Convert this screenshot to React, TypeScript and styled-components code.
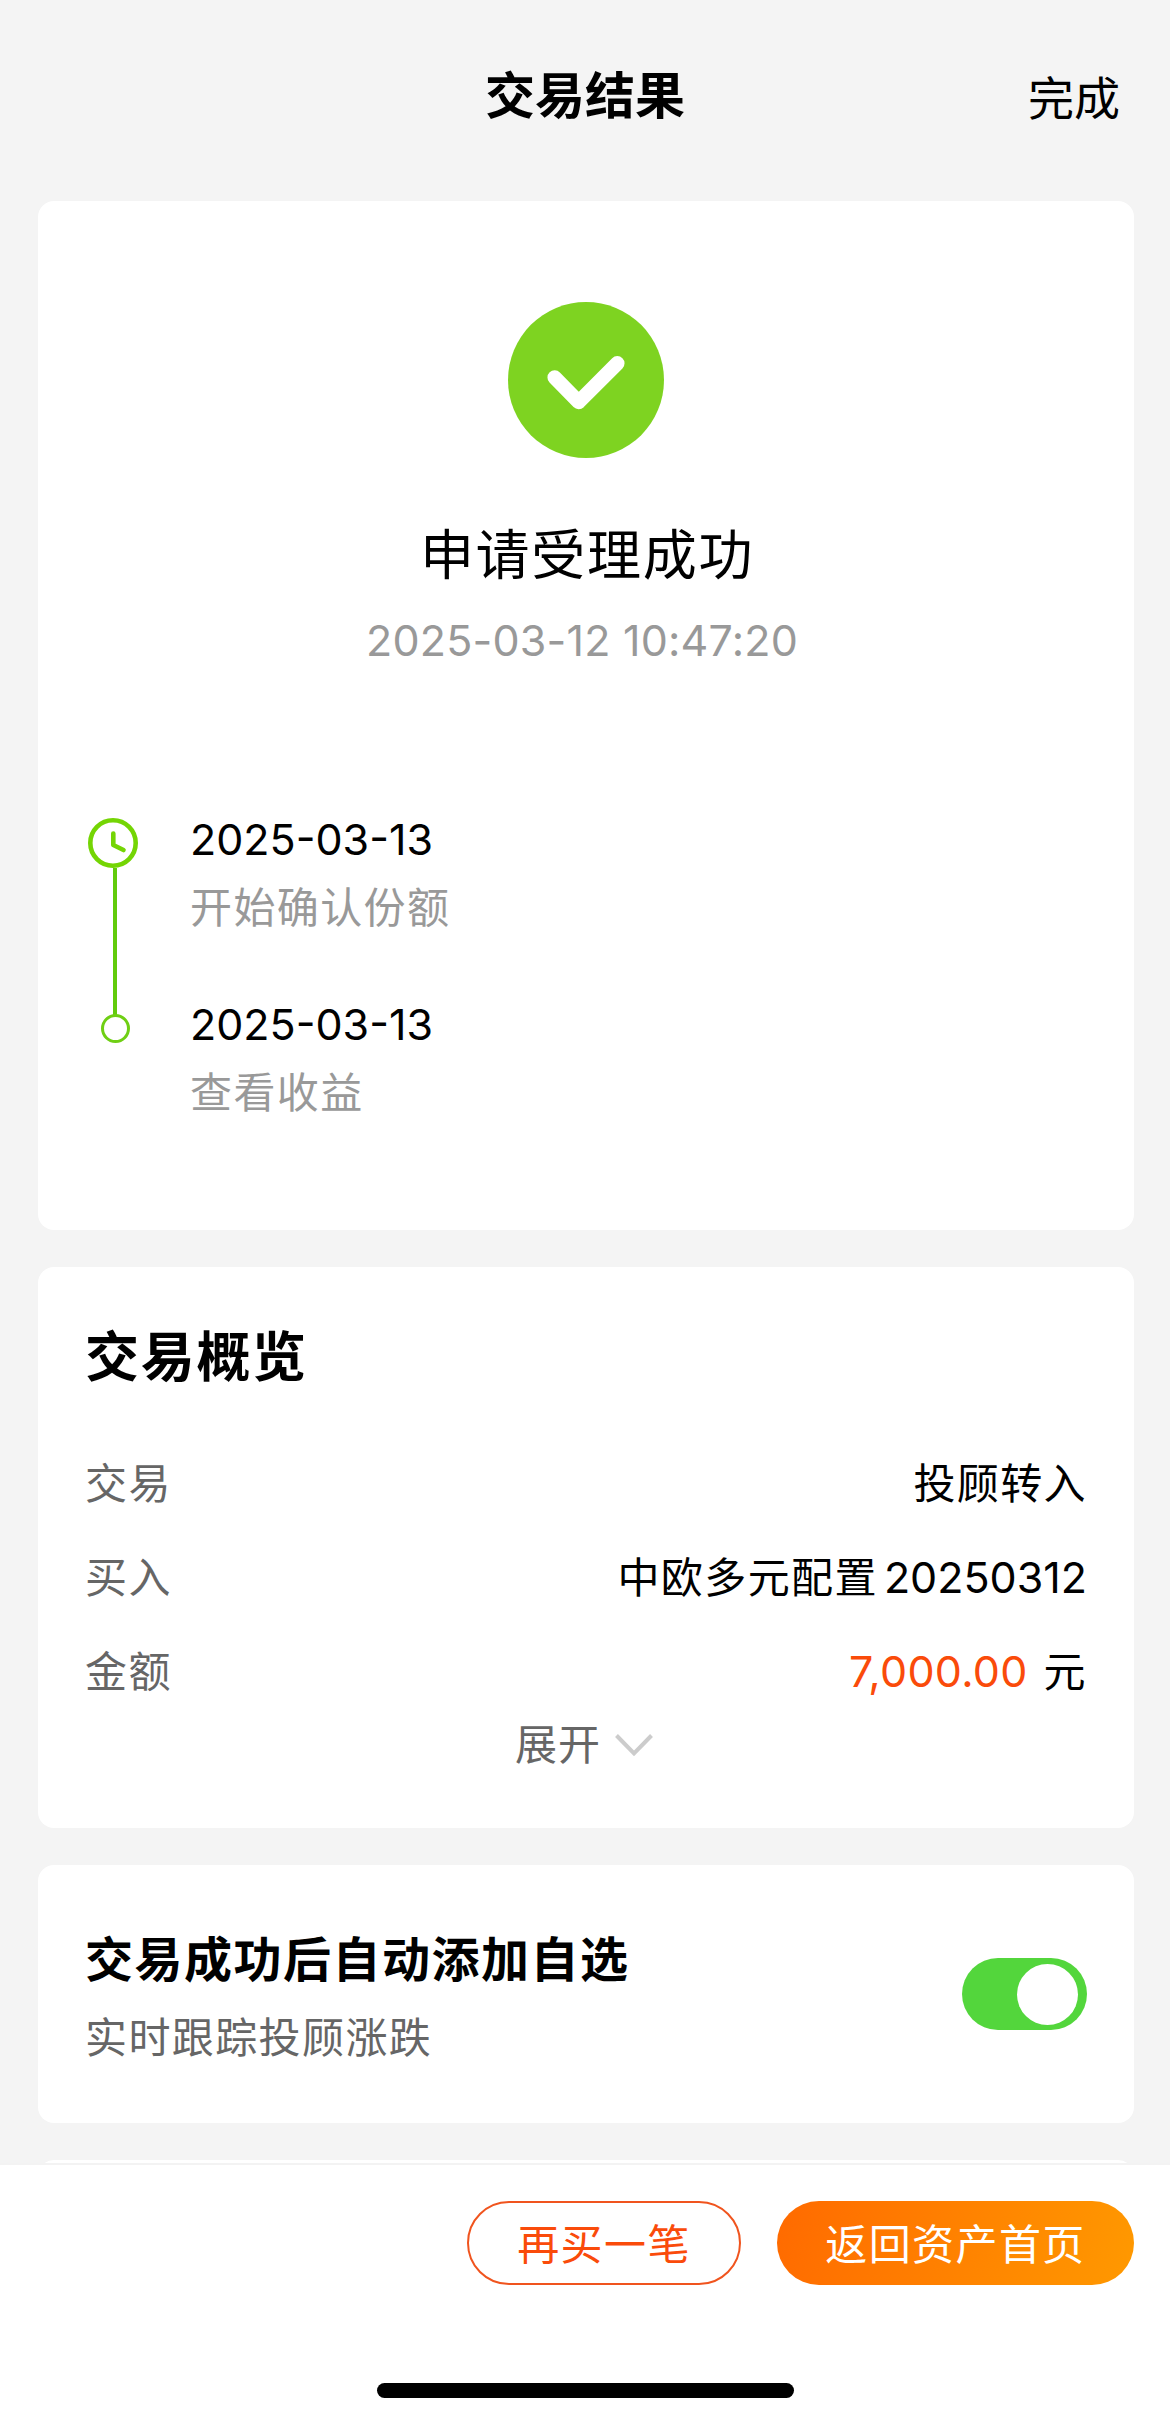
import React, { useState } from "react";
import styled, { createGlobalStyle } from "styled-components";

const GlobalStyle = createGlobalStyle`
  * { box-sizing: border-box; }
  body {
    margin: 0;
    background: #f4f4f4;
    color: #000;
    font-family: Inter, "Noto Sans CJK SC", sans-serif;
  }
  button { font: inherit; color: inherit; background: none; border: 0; padding: 0; cursor: pointer; }
  h1, h2, h3, p { margin: 0; }
`;

const Screen = styled.div`
  width: 1170px;
  height: 2422px;
  display: flex;
  flex-direction: column;
  overflow: hidden;
`;

const Header = styled.header`
  height: 201px;
  flex: none;
  display: grid;
  grid-template-columns: 1fr auto 1fr;
  align-items: start;
  padding: 60px 50px 0 50px;
`;

const Title = styled.h1`
  grid-column: 2;
  font-size: 50px;
  line-height: 72px;
  font-weight: 600;
`;

const DoneButton = styled.button`
  justify-self: end;
  font-size: 46px;
  line-height: 76px;
`;

const Content = styled.main`
  flex: 1;
  min-height: 0;
  overflow: hidden;
  padding: 0 36px 0 38px;
  display: flex;
  flex-direction: column;
`;

const Card = styled.section<{ $height: number }>`
  flex: none;
  height: ${(p) => p.$height}px;
  margin-bottom: 37px;
  padding: 0 47px;
  background: #fff;
  border-radius: 16px;
`;

const ResultHead = styled.div`
  display: flex;
  flex-direction: column;
  align-items: center;
  padding-top: 101px;
`;

const Headline = styled.h2`
  margin-top: 58px;
  padding-left: 2px;
  font-size: 54px;
  line-height: 80px;
  font-weight: 400;
  letter-spacing: 1.7px;
`;

const Timestamp = styled.p`
  margin: 16px 8px 0 0;
  font-size: 43px;
  line-height: 56px;
  letter-spacing: 0.2px;
  color: #999;
`;

const Timeline = styled.div`
  display: flex;
  gap: 49px;
  margin-top: 141px;
`;

const Rail = styled.div`
  width: 56px;
  padding-top: 9px;
  display: flex;
  flex-direction: column;
  align-items: center;
`;

const RailLine = styled.span`
  width: 4px;
  height: 147px;
  margin-left: 4px;
  background: #62cb0c;
`;

const RailDot = styled.span`
  width: 29px;
  height: 29px;
  margin: -1px 0 0 4px;
  border: 3px solid #6fcf14;
  border-radius: 50%;
`;

const Steps = styled.div`
  display: flex;
  flex-direction: column;
  gap: 56px;
`;

const StepDate = styled.p`
  font-size: 43px;
  line-height: 60px;
`;

const StepLabel = styled.p`
  margin-top: 9px;
  font-size: 42px;
  line-height: 60px;
  letter-spacing: 1.4px;
  color: #999;
`;

const SectionTitle = styled.h2`
  padding-top: 56px;
  margin-bottom: 61px;
  font-size: 54px;
  line-height: 70px;
  font-weight: 700;
  letter-spacing: 1.7px;
`;

const Rows = styled.dl`
  margin: 0;
  display: grid;
  gap: 34px;
`;

const Row = styled.div`
  display: flex;
  justify-content: space-between;
  font-size: 42px;
  line-height: 60px;
  letter-spacing: 1.4px;
`;

const RowLabel = styled.dt`
  color: #666;
`;

const RowValue = styled.dd`
  margin: 0;
  display: flex;
`;

const Digits = styled.span`
  margin: -1px 0 1px 6px;
  font-size: 43px;
  letter-spacing: 0;
`;

const Amount = styled(Digits)`
  margin: -1px 16px 1px 0;
  letter-spacing: 0.3px;
  color: #fa4b0a;
`;

const ExpandButton = styled.button`
  display: flex;
  align-items: center;
  gap: 14px;
  margin: 13px auto 0;
  padding-right: 4px;
  font-size: 42px;
  line-height: 60px;
  letter-spacing: 1px;
  color: #666;
`;

const WatchRow = styled.div`
  height: 100%;
  display: flex;
  justify-content: space-between;
  align-items: flex-start;
`;

const WatchTitle = styled.h3`
  padding-top: 60px;
  font-size: 48px;
  line-height: 70px;
  font-weight: 700;
  letter-spacing: 1.5px;
`;

const WatchHint = styled.p`
  margin-top: 13px;
  font-size: 42px;
  line-height: 60px;
  letter-spacing: 1.4px;
  color: #666;
`;

const Switch = styled.button<{ $on: boolean }>`
  display: flex;
  align-items: center;
  justify-content: ${(p) => (p.$on ? "flex-end" : "flex-start")};
  width: 125px;
  height: 72px;
  margin-top: 93px;
  padding: 0 9px;
  border-radius: 36px;
  background: ${(p) => (p.$on ? "#53d63c" : "#ddd")};
`;

const Knob = styled.span`
  width: 61px;
  height: 61px;
  border-radius: 50%;
  background: #fff;
`;

const Footer = styled.footer`
  flex: none;
  height: 259px;
  background: #fff;
  border-top: 2px solid #f3f3f3;
  padding: 36px 36px 0;
  display: flex;
  flex-direction: column;
`;

const Actions = styled.div`
  display: flex;
  justify-content: flex-end;
  gap: 36px;
`;

const ActionButton = styled.button<{ $width: number; $primary?: boolean }>`
  width: ${(p) => p.$width}px;
  height: 84px;
  border-radius: 42px;
  padding-bottom: 3px;
  font-size: 42px;
  letter-spacing: 1.4px;
  border: ${(p) => (p.$primary ? "0" : "2px solid #f0541e")};
  color: ${(p) => (p.$primary ? "#fff" : "#fa4b0a")};
  background: ${(p) => (p.$primary ? "linear-gradient(105deg, #ff6a00, #ff9900)" : "#fff")};
`;

const HomeIndicator = styled.div`
  width: 417px;
  height: 15px;
  margin: 98px auto 0;
  border-radius: 8px;
  background: #000;
`;

const SuccessIcon = () => (
  <svg width="156" height="156" viewBox="0 0 156 156">
    <circle cx="78" cy="78" r="78" fill="#7ed321" />
    <path d="M46.7 75.5 70.7 100 109.3 61.3" fill="none" stroke="#fff" strokeWidth="14.5" strokeLinecap="round" strokeLinejoin="round" />
  </svg>
);

const ClockIcon = () => (
  <svg width="50" height="50" viewBox="0 0 50 50">
    <circle cx="25" cy="25" r="22.7" fill="none" stroke="#74d504" strokeWidth="4.6" />
    <path d="M25.3 15.5V27L35.5 32" fill="none" stroke="#74d504" strokeWidth="4.6" strokeLinecap="round" strokeLinejoin="round" />
  </svg>
);

const ChevronDown = () => (
  <svg width="38" height="24" viewBox="0 0 38 24">
    <path d="M1.5 2.5 19 20.5 36.5 2.5" fill="none" stroke="#ccc" strokeWidth="4" />
  </svg>
);

const steps = [
  { date: "2025-03-13", label: "开始确认份额" },
  { date: "2025-03-13", label: "查看收益" },
];

export default function App() {
  const [watching, setWatching] = useState(true);
  return (
    <>
      <GlobalStyle />
      <Screen>
        <Header>
          <Title>交易结果</Title>
          <DoneButton>完成</DoneButton>
        </Header>
        <Content>
          <Card $height={1029}>
            <ResultHead>
              <SuccessIcon />
              <Headline>申请受理成功</Headline>
              <Timestamp>2025-03-12 10:47:20</Timestamp>
            </ResultHead>
            <Timeline>
              <Rail>
                <ClockIcon />
                <RailLine />
                <RailDot />
              </Rail>
              <Steps>
                {steps.map((s) => (
                  <div key={s.label}>
                    <StepDate>{s.date}</StepDate>
                    <StepLabel>{s.label}</StepLabel>
                  </div>
                ))}
              </Steps>
            </Timeline>
          </Card>
          <Card $height={561}>
            <SectionTitle>交易概览</SectionTitle>
            <Rows>
              <Row>
                <RowLabel>交易</RowLabel>
                <RowValue>投顾转入</RowValue>
              </Row>
              <Row>
                <RowLabel>买入</RowLabel>
                <RowValue>
                  中欧多元配置<Digits>20250312</Digits>
                </RowValue>
              </Row>
              <Row>
                <RowLabel>金额</RowLabel>
                <RowValue>
                  <Amount>7,000.00</Amount>元
                </RowValue>
              </Row>
            </Rows>
            <ExpandButton>
              展开
              <ChevronDown />
            </ExpandButton>
          </Card>
          <Card $height={258}>
            <WatchRow>
              <div>
                <WatchTitle>交易成功后自动添加自选</WatchTitle>
                <WatchHint>实时跟踪投顾涨跌</WatchHint>
              </div>
              <Switch $on={watching} role="switch" aria-checked={watching} onClick={() => setWatching(!watching)}>
                <Knob />
              </Switch>
            </WatchRow>
          </Card>
          <Card $height={160} />
        </Content>
        <Footer>
          <Actions>
            <ActionButton $width={274}>再买一笔</ActionButton>
            <ActionButton $width={357} $primary>返回资产首页</ActionButton>
          </Actions>
          <HomeIndicator />
        </Footer>
      </Screen>
    </>
  );
}
